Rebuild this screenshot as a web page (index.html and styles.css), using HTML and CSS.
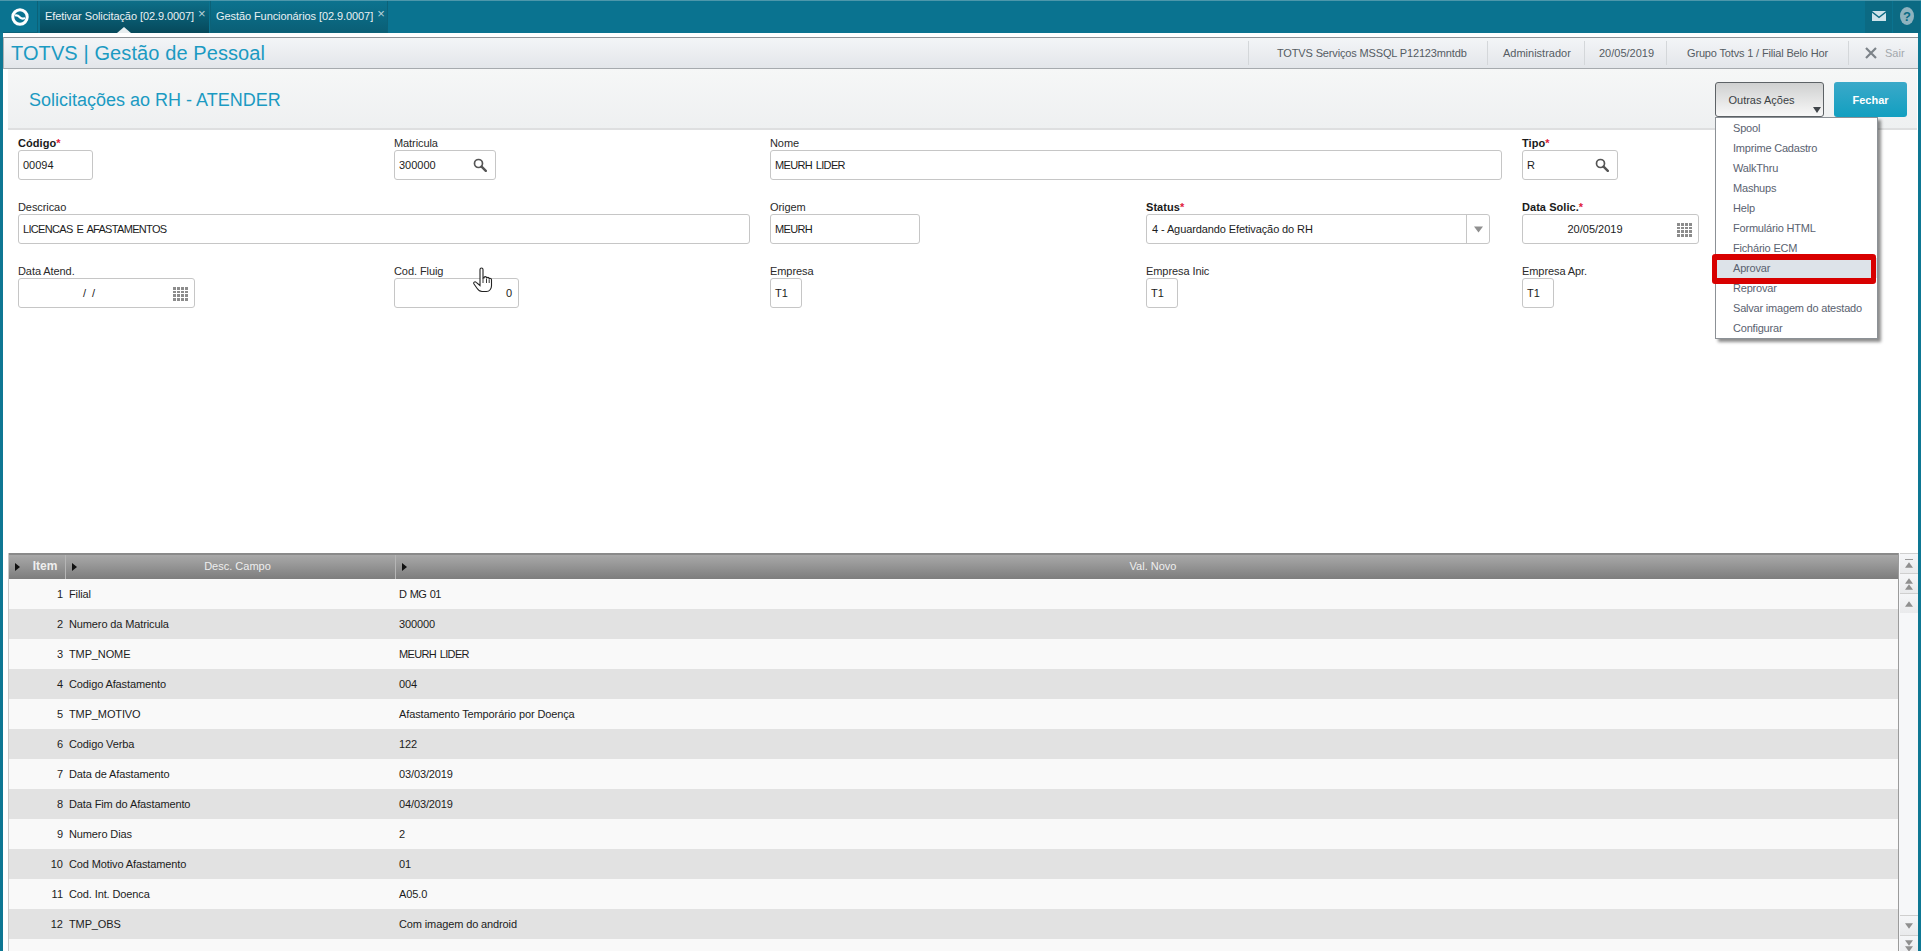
FILE: index.html
```html
<!DOCTYPE html>
<html lang="pt-BR">
<head>
<meta charset="utf-8">
<title>TOTVS | Gestão de Pessoal</title>
<link rel="stylesheet" href="styles.css">
</head>
<body>
<svg class="defs" width="0" height="0" aria-hidden="true">
  <symbol id="lupa" viewBox="0 0 14 14"><circle cx="5.5" cy="5.5" r="4" fill="none" stroke="#555" stroke-width="1.7"/><path d="M8.6 8.6l4.2 4.2" stroke="#555" stroke-width="2.4" stroke-linecap="round"/></symbol>
  <symbol id="cal" viewBox="0 0 15 14"><path d="M0 0h3v3H0zM4 0h3v3H4zM8 0h3v3H8zM12 0h3v3h-3zM0 4h3v2H0zM4 4h3v2H4zM8 4h3v2H8zM12 4h3v2h-3zM0 7h3v3H0zM4 7h3v3H4zM8 7h3v3H8zM12 7h3v3h-3zM0 11h3v3H0zM4 11h3v3H4zM8 11h3v3H8zM12 11h3v3h-3z" fill="#8c8c8c"/></symbol>
  <symbol id="up" viewBox="0 0 12 8"><path d="M6 0l6 8H0z" fill="#8f8f8f"/></symbol>
  <symbol id="down" viewBox="0 0 12 8"><path d="M6 8L0 0h12z" fill="#8f8f8f"/></symbol>
</svg>

<header class="topbar">
  <div class="logo-box">
    <svg class="logo" viewBox="0 0 20 20"><circle cx="10" cy="10" r="7.2" fill="none" stroke="#fff" stroke-width="3"/><path d="M5 8.500C8 7.500 9 9.500 10 10.500S13 12 15 11" fill="none" stroke="#fff" stroke-width="2.200"/></svg>
  </div>
  <div class="tab tab-active">
    <span class="tab-label">Efetivar Solicitação [02.9.0007]</span><span class="tab-x">×</span>
  </div>
  <div class="tab tab-other">
    <span class="tab-label">Gestão Funcionários [02.9.0007]</span><span class="tab-x">×</span>
  </div>
  <div class="top-tools">
    <div class="tool">
      <svg class="tool-mail" viewBox="0 0 14 10"><path d="M0 0h14L7 5.5z M0 1.8L7 7.2l7-5.4V10H0z" fill="#cfe3ea"/></svg>
    </div>
    <div class="tool">
      <svg class="tool-help" viewBox="0 0 14 18"><ellipse cx="7" cy="9" rx="7" ry="9" fill="#8fb3bf"/><text x="7" y="13.500" class="help-mark">?</text></svg>
    </div>
  </div>
</header>

<div class="shell">
  <div class="appbar">
    <div class="app-title">TOTVS | Gestão de Pessoal</div>
    <div class="app-info">
      <div class="info info-server">TOTVS Serviços MSSQL P12123mntdb</div>
      <div class="info info-user">Administrador</div>
      <div class="info info-date">20/05/2019</div>
      <div class="info info-branch">Grupo Totvs 1 / Filial Belo Hor</div>
      <div class="info info-exit"><svg class="exit-x" viewBox="0 0 12 12"><path d="M1 1l10 10M11 1L1 11" stroke="#7d8389" stroke-width="2.2"/></svg><span class="exit-text">Sair</span></div>
    </div>
  </div>

  <div class="page-band">
    <h1 class="page-title">Solicitações ao RH - ATENDER</h1>
    <div class="page-actions">
      <div class="action-wrap">
        <button class="btn-more">Outras Ações<span class="caret"></span></button>
        <ul class="menu">
          <li class="menu-item">Spool</li>
          <li class="menu-item">Imprime Cadastro</li>
          <li class="menu-item">WalkThru</li>
          <li class="menu-item">Mashups</li>
          <li class="menu-item">Help</li>
          <li class="menu-item">Formulário HTML</li>
          <li class="menu-item">Fichário ECM</li>
          <li class="menu-item menu-mark">Aprovar</li>
          <li class="menu-item">Reprovar</li>
          <li class="menu-item">Salvar imagem do atestado</li>
          <li class="menu-item">Configurar</li>
        </ul>
      </div>
      <button class="btn-close">Fechar</button>
    </div>
  </div>

  <div class="form">
    <div class="field"><label class="lbl lbl-req">Código<i>*</i></label><div class="inp w-75">00094</div></div>
    <div class="field"><label class="lbl">Matricula</label><div class="inp w-102">300000<svg class="ico-lupa"><use href="#lupa"/></svg></div></div>
    <div class="field span-2"><label class="lbl">Nome</label><div class="inp w-732 caps">MEURH LIDER</div></div>
    <div class="field"><label class="lbl lbl-req">Tipo<i>*</i></label><div class="inp w-96">R<svg class="ico-lupa"><use href="#lupa"/></svg></div></div>

    <div class="field span-2"><label class="lbl">Descricao</label><div class="inp w-732 caps">LICENCAS E AFASTAMENTOS</div></div>
    <div class="field"><label class="lbl">Origem</label><div class="inp w-150 caps">MEURH</div></div>
    <div class="field"><label class="lbl lbl-req">Status<i>*</i></label><div class="inp w-344 inp-select">4 - Aguardando Efetivação do RH<span class="select-btn"><svg class="ico-sel"><use href="#down"/></svg></span></div></div>
    <div class="field"><label class="lbl lbl-req">Data Solic.<i>*</i></label><div class="inp w-177 inp-date">20/05/2019<svg class="ico-cal"><use href="#cal"/></svg></div></div>

    <div class="field"><label class="lbl">Data Atend.</label><div class="inp w-177 inp-date inp-blank">/ &nbsp;/<svg class="ico-cal"><use href="#cal"/></svg></div></div>
    <div class="field"><label class="lbl">Cod. Fluig</label><div class="inp w-125 inp-num">0</div></div>
    <div class="field"><label class="lbl">Empresa</label><div class="inp w-32">T1</div></div>
    <div class="field"><label class="lbl">Empresa Inic</label><div class="inp w-32">T1</div></div>
    <div class="field"><label class="lbl">Empresa Apr.</label><div class="inp w-32">T1</div></div>

    <svg class="hand" viewBox="0 0 20 26"><path d="M7 2.500c0-2 3-2 3 0V11l1 0c0-1.800 2.600-1.800 2.600 0v.5c.2-1.500 2.400-1.500 2.500 0l0 .7c.3-1.200 2.400-1 2.400.5v6c0 3-2 5.800-5 5.800H9c-2.500 0-3.800-1.500-5-3.300L1 17c-1-1.500.8-3 2.200-1.700L7 18.500z" fill="#fff" stroke="#222" stroke-width="1.100"/><path d="M10 11v5M13.500 12v4M16.200 12.500v3.500" stroke="#222" stroke-width=".9"/></svg>
  </div>

  <section class="grid">
    <div class="grid-main">
      <div class="g-row g-head">
        <div class="g-hcell g-hbold"><span class="tri"></span>Item</div>
        <div class="g-hcell g-hdesc"><span class="tri"></span>Desc. Campo</div>
        <div class="g-hcell g-hval"><span class="tri"></span>Val. Novo</div>
      </div>
      <div class="g-row"><div class="g-num">1</div><div class="g-txt">Filial</div><div class="g-txt caps-soft">D MG 01</div></div>
      <div class="g-row g-alt"><div class="g-num">2</div><div class="g-txt">Numero da Matricula</div><div class="g-txt">300000</div></div>
      <div class="g-row"><div class="g-num">3</div><div class="g-txt">TMP_NOME</div><div class="g-txt caps">MEURH LIDER</div></div>
      <div class="g-row g-alt"><div class="g-num">4</div><div class="g-txt">Codigo Afastamento</div><div class="g-txt">004</div></div>
      <div class="g-row"><div class="g-num">5</div><div class="g-txt">TMP_MOTIVO</div><div class="g-txt">Afastamento Temporário por Doença</div></div>
      <div class="g-row g-alt"><div class="g-num">6</div><div class="g-txt">Codigo Verba</div><div class="g-txt">122</div></div>
      <div class="g-row"><div class="g-num">7</div><div class="g-txt">Data de Afastamento</div><div class="g-txt">03/03/2019</div></div>
      <div class="g-row g-alt"><div class="g-num">8</div><div class="g-txt">Data Fim do Afastamento</div><div class="g-txt">04/03/2019</div></div>
      <div class="g-row"><div class="g-num">9</div><div class="g-txt">Numero Dias</div><div class="g-txt">2</div></div>
      <div class="g-row g-alt"><div class="g-num">10</div><div class="g-txt">Cod Motivo Afastamento</div><div class="g-txt">01</div></div>
      <div class="g-row"><div class="g-num">11</div><div class="g-txt">Cod. Int. Doenca</div><div class="g-txt">A05.0</div></div>
      <div class="g-row g-alt"><div class="g-num">12</div><div class="g-txt">TMP_OBS</div><div class="g-txt">Com imagem do android</div></div>
    </div>
    <div class="scroll">
      <div class="scroll-group">
        <div class="s-btn"><span class="s-bar"></span><svg class="s-ico"><use href="#up"/></svg></div>
        <div class="s-btn"><svg class="s-ico"><use href="#up"/></svg><svg class="s-ico"><use href="#up"/></svg></div>
        <div class="s-btn"><svg class="s-ico"><use href="#up"/></svg></div>
      </div>
      <div class="scroll-group scroll-end">
        <div class="s-btn"><svg class="s-ico"><use href="#down"/></svg></div>
        <div class="s-btn"><svg class="s-ico"><use href="#down"/></svg><svg class="s-ico"><use href="#down"/></svg></div>
      </div>
    </div>
  </section>
</div>
</body>
</html>
```
FILE: styles.css
```css
* { box-sizing: border-box; }
html, body { margin: 0; height: 951px; overflow: hidden; }
body {
  background: #fff;
  font-family: "Liberation Sans", Arial, sans-serif;
  font-size: 11px;
  color: #1c1c1c;
}
.defs { position: absolute; }

/* top bar */
.topbar {
  display: flex;
  height: 33px;
  background: #0a7390;
  border-top: 1px solid #4d97ab;
  padding-left: 3px;
  color: #fff;
}
.logo-box {
  width: 35px;
  display: flex;
  align-items: center;
  justify-content: center;
  border-right: 1px solid #0c6278;
  border-bottom: 1px solid #0c6278;
}
.logo { width: 20px; height: 20px; }
.tab {
  display: flex;
  height: 32px;
  padding: 7px 0 0 5px;
  margin-left: 2px;
  font-size: 11px;
  white-space: nowrap;
  position: relative;
}
.tab-active {
  width: 169px;
  background: linear-gradient(#0d6f89, #06495b);
}
.tab-active::after {
  content: "";
  position: absolute;
  left: 77px;
  bottom: 0;
  border: 7px solid transparent;
  border-top: 0;
  border-bottom: 6px solid #e8eef0;
}
.tab-other {
  width: 178px;
  margin-left: 1px;
  padding-left: 5px;
  background: linear-gradient(#0c738f, #0a5f76);
  border: 1px solid #0c6278;
  border-top: 0;
}
.tab-label { line-height: 16px; color: #e9f1f4; letter-spacing: -.08px; }
.tab-x { margin-left: 4px; line-height: 12px; font-size: 13px; color: #b9d2da; }
.top-tools { display: flex; margin-left: auto; margin-right: 1px; }
.tool {
  width: 27px;
  height: 32px;
  background: #0b6a83;
  margin-left: 1px;
  display: flex;
  align-items: center;
  justify-content: center;
}
.tool-mail { width: 14px; height: 10px; margin-bottom: 3px; }
.tool-help { width: 14px; height: 18px; margin-bottom: 3px; }
.help-mark { font: bold 13px "Liberation Sans", sans-serif; fill: #0a6a83; text-anchor: middle; }

/* shell */
.shell {
  height: 918px;
  display: flex;
  flex-direction: column;
  border-left: 3px solid #0e7793;
  border-right: 3px solid #0e7793;
  padding-top: 4px;
  overflow: hidden;
  position: relative;
}

/* app bar */
.appbar {
  flex: none;
  height: 32px;
  display: flex;
  align-items: center;
  justify-content: space-between;
  background: linear-gradient(#f3f5f7, #e3e6ea);
  border-top: 1px solid #8d9296;
  border-left: 1px solid #aeb2b5;
  border-bottom: 1px solid #a6aaae;
  padding-left: 7px;
}
.app-title {
  font-size: 20px;
  color: #1b9ac2;
  letter-spacing: .1px;
}
.app-info { display: flex; height: 24px; font-size: 11px; color: #555c63; }
.info {
  display: flex;
  align-items: center;
  border-left: 1px solid #d4d7da;
  padding-left: 16px;
  white-space: nowrap;
}
.info-server { width: 239px; padding-left: 28px; letter-spacing: -.15px; }
.info-user { width: 97px; padding-left: 15px; }
.info-date { width: 82px; padding-left: 14px; }
.info-branch { width: 182px; padding-left: 20px; letter-spacing: -.16px; }
.info-exit { width: 70px; padding-left: 16px; }
.exit-x { width: 12px; height: 12px; margin-right: 8px; flex: none; }
.exit-text { color: #a3a8ad; }

/* page band */
.page-band {
  flex: none;
  height: 61px;
  margin: 0 1px 0 5px;
  display: flex;
  align-items: flex-start;
  justify-content: space-between;
  background: linear-gradient(#f6f7f7, #eef0f1);
  border-bottom: 2px solid #dedfe0;
  padding: 13px 10px 0 21px;
}
.page-title {
  margin: 8px 0 0;
  font-size: 18px;
  font-weight: 400;
  line-height: 20px;
  color: #1b9ac2;
}
.page-actions { display: flex; gap: 10px; }
.action-wrap { position: relative; }
.btn-more {
  display: block;
  position: relative;
  width: 109px;
  height: 35px;
  padding: 0 16px 0 0;
  background: linear-gradient(#cfd0d0, #f8f8f8);
  border: 1px solid #5d6266;
  border-radius: 3px;
  font: 11px "Liberation Sans", sans-serif;
  color: #3a3f44;
}
.caret {
  position: absolute;
  right: 2px;
  bottom: 3px;
  border: 4px solid transparent;
  border-bottom: 0;
  border-top: 6px solid #40454a;
}
.btn-close {
  width: 73px;
  height: 35px;
  background: linear-gradient(#3ba9c9, #129fc0);
  border: 0;
  border-radius: 3px;
  font: bold 11px "Liberation Sans", sans-serif;
  color: #fff;
}
.menu {
  position: absolute;
  top: 35px;
  left: 0;
  width: 163px;
  height: 222px;
  margin: 0;
  padding: 0;
  list-style: none;
  background: #fff;
  border: 1px solid #8c9196;
  box-shadow: 3px 3px 3px rgba(0,0,0,.45);
  z-index: 5;
}
.menu-item {
  height: 20px;
  line-height: 20px;
  padding-left: 17px;
  color: #5a6270;
  letter-spacing: -.2px;
  position: relative;
}
.menu-mark { background: #dde3e9; }
.menu-mark::after {
  content: "";
  position: absolute;
  top: -4px;
  bottom: -6px;
  left: -4px;
  right: 1px;
  border: 6px solid #d80000;
  border-left-width: 5px;
  border-right-width: 5px;
  border-radius: 3px;
}

/* form */
.form {
  flex: 1;
  min-height: 0;
  display: grid;
  grid-template-columns: repeat(5, 376px);
  grid-auto-rows: 44px;
  row-gap: 20px;
  padding: 6px 0 0 15px;
  position: relative;
}
.span-2 { grid-column: span 2; }
.lbl { display: block; height: 14px; line-height: 14px; color: #2a2a2a; letter-spacing: -.08px; }
.lbl-req { font-weight: 700; color: #1a1a1a; letter-spacing: .05px; }
.lbl i { font-style: normal; color: #e0213c; }
.inp {
  position: relative;
  height: 30px;
  line-height: 28px;
  padding-left: 4px;
  background: #fff;
  border: 1px solid #c6c6c6;
  border-radius: 3px;
  color: #1c1c1c;
}
.caps { letter-spacing: -.68px; word-spacing: 1.5px; }
.caps-soft { letter-spacing: -.6px; word-spacing: 1px; }
.w-32 { width: 32px; }
.w-75 { width: 75px; }
.w-96 { width: 96px; }
.w-102 { width: 102px; }
.w-125 { width: 125px; }
.w-150 { width: 150px; }
.w-177 { width: 177px; }
.w-344 { width: 344px; }
.w-732 { width: 732px; }
.inp-date { text-align: center; padding-right: 35px; }
.inp-blank { padding-right: 39px; }
.inp-num { text-align: right; padding-right: 6px; }
.inp-select { padding-left: 5px; letter-spacing: -.1px; }
.select-btn {
  position: absolute;
  top: 0;
  right: 0;
  bottom: 0;
  width: 23px;
  border-left: 1px solid #c6c6c6;
  display: flex;
  align-items: center;
  justify-content: center;
}
.ico-sel { width: 9px; height: 7px; }
.ico-lupa { position: absolute; top: 7px; right: 8px; width: 14px; height: 14px; }
.ico-cal { position: absolute; top: 8px; right: 6px; width: 15px; height: 14px; }
.hand { position: absolute; left: 470px; top: 137px; width: 20px; height: 26px; }

/* grid */
.grid {
  flex: none;
  height: 398px;
  margin-left: 5px;
  display: flex;
  overflow: hidden;
}
.grid-main { flex: 1; background: #f9f9f9; border-left: 1px solid #c9c9c9; }
.g-row {
  display: grid;
  grid-template-columns: 57px 330px 1fr;
  height: 30px;
  line-height: 30px;
}
.g-alt { background: #e2e2e2; }
.g-head {
  height: 26px;
  line-height: 22px;
  background: linear-gradient(#a9a9a9, #7d7d7d);
  border-top: 2px solid #8a8a8a;
  color: #eee;
}
.g-hcell {
  position: relative;
  text-align: center;
  border-right: 1px solid #b5b5b5;
}
.g-hcell:last-child { border-right: 0; }
.g-hbold { font-weight: 700; font-size: 12px; padding-left: 16px; }
.g-hdesc { padding-left: 14px; }
.g-hval { padding-left: 12px; }
.tri {
  position: absolute;
  left: 6px;
  top: 8px;
  border: 4px solid transparent;
  border-right: 0;
  border-left: 5px solid #111;
}
.g-num { text-align: right; padding-right: 3px; }
.g-txt { padding-left: 3px; letter-spacing: -.12px; }
.g-txt.caps { letter-spacing: -.68px; word-spacing: 1.5px; }
.g-txt.caps-soft { letter-spacing: -.6px; word-spacing: 1px; }
.scroll {
  flex: none;
  width: 20px;
  display: flex;
  flex-direction: column;
  justify-content: space-between;
  background: #f6f7f9;
  border-left: 1px solid #9b9b9b;
  padding-left: 1px;
}
.scroll-end { margin-bottom: -4px; }
.s-btn {
  height: 20px;
  display: flex;
  flex-direction: column;
  align-items: center;
  justify-content: center;
  background: linear-gradient(#f5f6f8, #e9eaec);
  border-top: 1px solid #cfcfcf;
}
.s-bar { width: 8px; height: 1px; margin-bottom: 2px; background: #9a9a9a; }
.s-ico { width: 8px; height: 6px; flex: none; }
```
